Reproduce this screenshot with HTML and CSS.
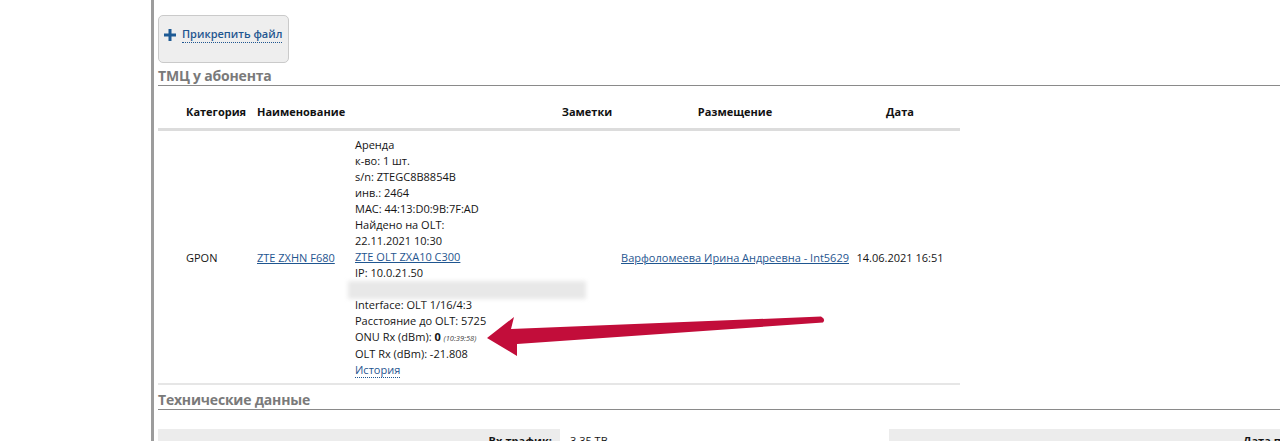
FILE: index.html
```html
<!DOCTYPE html>
<html lang="ru">
<head>
    <meta charset="UTF-8">
    <meta name="viewport" content="width=device-width, initial-scale=1.0">
    <title>Абонент</title>
    <link rel="stylesheet" href="styles.css">
</head>
<body>
<div class="page">
    <div class="side"></div>
    <div class="main">
        <div class="attach">
            <a href="#" class="attach-link">
                <svg class="plus" width="12" height="12" viewBox="0 0 12 12"><path d="M4.5 0h3v4.5H12v3H7.5V12h-3V7.5H0v-3h4.5z"/></svg>
                <span>Прикрепить файл</span>
            </a>
        </div>

        <h2 class="section-title">ТМЦ у абонента</h2>
        <table class="items">
            <colgroup>
                <col class="c-cat">
                <col class="c-name">
                <col class="c-info">
                <col class="c-notes">
                <col class="c-place">
                <col class="c-date">
            </colgroup>
            <tr>
                <th class="left">Категория</th>
                <th class="left name">Наименование</th>
                <th></th>
                <th>Заметки</th>
                <th>Размещение</th>
                <th class="date">Дата</th>
            </tr>
            <tr>
                <td class="left">GPON</td>
                <td class="left name"><a href="#">ZTE ZXHN F680</a></td>
                <td class="info">
                    <div>Аренда</div>
                    <div>к-во: 1 шт.</div>
                    <div>s/n: ZTEGC8B8854B</div>
                    <div>инв.: 2464</div>
                    <div>MAC: 44:13:D0:9B:7F:AD</div>
                    <div>Найдено на OLT:</div>
                    <div>22.11.2021 10:30</div>
                    <div><a href="#">ZTE OLT ZXA10 C300</a></div>
                    <div>IP: 10.0.21.50</div>
                    <div class="hidden-line"><span class="smudge"></span></div>
                    <div>Interface: OLT 1/16/4:3</div>
                    <div>Расстояние до OLT: 5725</div>
                    <div>ONU Rx (dBm): <b>0</b> <i class="time">(10:39:58)</i></div>
                    <div>OLT Rx (dBm): -21.808</div>
                    <div><a href="#" class="dotted">История</a></div>
                </td>
                <td></td>
                <td><a href="#">Варфоломеева Ирина Андреевна - Int5629</a></td>
                <td class="date">14.06.2021 16:51</td>
            </tr>
        </table>

        <h2 class="section-title">Технические данные</h2>
        <div class="tech">
            <div class="tech-label">Вх.трафик:</div>
            <div class="tech-value">3.35 ТВ</div>
            <div class="tech-label wide">Дата подключения:</div>
        </div>
    </div>
</div>

<svg class="arrow" width="360" height="60" viewBox="480 305 360 60">
    <path d="M487 338 L514 317 L511 329 L821 316.5 Q826 319 823 322.5 L517 344 L517 356 Z"/>
</svg>
</body>
</html>
```

FILE: styles.css
```css
body{
    margin: 0;
    font-family: "Open Sans", "DejaVu Sans", sans-serif;
    font-size: 11px;
    color: #151515;
    background: #fff;
}
a{
    color: #1f5690;
}
.page{
    display: flex;
    min-height: 441px;
}
.side{
    width: 151px;
    flex: none;
}
.main{
    flex: 1;
    border-left: 3px solid #9c9c9c;
    padding-left: 4px;
    overflow: hidden;
}

.attach{
    margin-top: 15px;
    width: 131px;
    height: 48px;
    box-sizing: border-box;
    border: 1px solid #cacaca;
    border-radius: 5px;
    background: #eeeeee;
    padding: 10px 0 0 5px;
}
.attach-link{
    display: flex;
    align-items: center;
    gap: 6px;
    text-decoration: none;
    white-space: nowrap;
    font-weight: 600;
}
.plus{
    fill: #1d5a94;
    flex: none;
}
.attach-link span{
    line-height: 16px;
    border-bottom: 1px dotted #1f5690;
}

.section-title{
    margin: 0;
    padding-top: 4px;
    font-size: 14px;
    line-height: 18px;
    color: #7a7a7a;
    border-bottom: 1px solid #8a8a8a;
    letter-spacing: -0.2px;
}

.items{
    width: 802px;
    margin-top: 10px;
    margin-bottom: 2px;
    border-collapse: collapse;
    table-layout: fixed;
}
.c-cat{ width: 92px; }
.c-name{ width: 100px; }
.c-info{ width: 206px; }
.c-notes{ width: 62px; }
.c-place{ width: 234px; }
.c-date{ width: 108px; }

.items th{
    font-weight: bold;
    color: #111;
    line-height: 16px;
    padding: 8px 0;
    text-align: center;
    border-bottom: 3px solid #dcdcdc;
    white-space: nowrap;
}
.items td{
    line-height: 16px;
    padding: 6px 0 5px;
    text-align: center;
    border-bottom: 2px solid #e6e6e6;
    white-space: nowrap;
}
.items .left{
    text-align: left;
    padding-left: 28px;
}
.items .name{
    padding-left: 7px;
}
.items .date{
    padding-right: 12px;
}
.items td.info{
    text-align: left;
    padding-left: 5px;
}
.time{
    font-size: 7.5px;
    color: #444;
}
.dotted{
    text-decoration: none;
    border-bottom: 1px dotted #1f5690;
}
.hidden-line{
    height: 16px;
}
.smudge{
    display: block;
    width: 238px;
    height: 18px;
    margin-left: -7px;
    background: #e8e8e8;
    filter: blur(2px);
}

.tech{
    display: flex;
    margin-top: 19px;
    font-weight: bold;
    line-height: 16px;
    white-space: nowrap;
}
.tech-label{
    width: 402px;
    flex: none;
    box-sizing: border-box;
    background: #ececec;
    padding: 4px 8px 0 0;
    text-align: right;
}
.tech-value{
    width: 329px;
    flex: none;
    padding: 4px 0 0 10px;
    box-sizing: border-box;
    font-weight: normal;
}
.tech-label.wide{
    width: 520px;
    text-align: left;
    padding-left: 354px;
}

.arrow{
    position: absolute;
    left: 480px;
    top: 305px;
    fill: #c20d3a;
}
```
